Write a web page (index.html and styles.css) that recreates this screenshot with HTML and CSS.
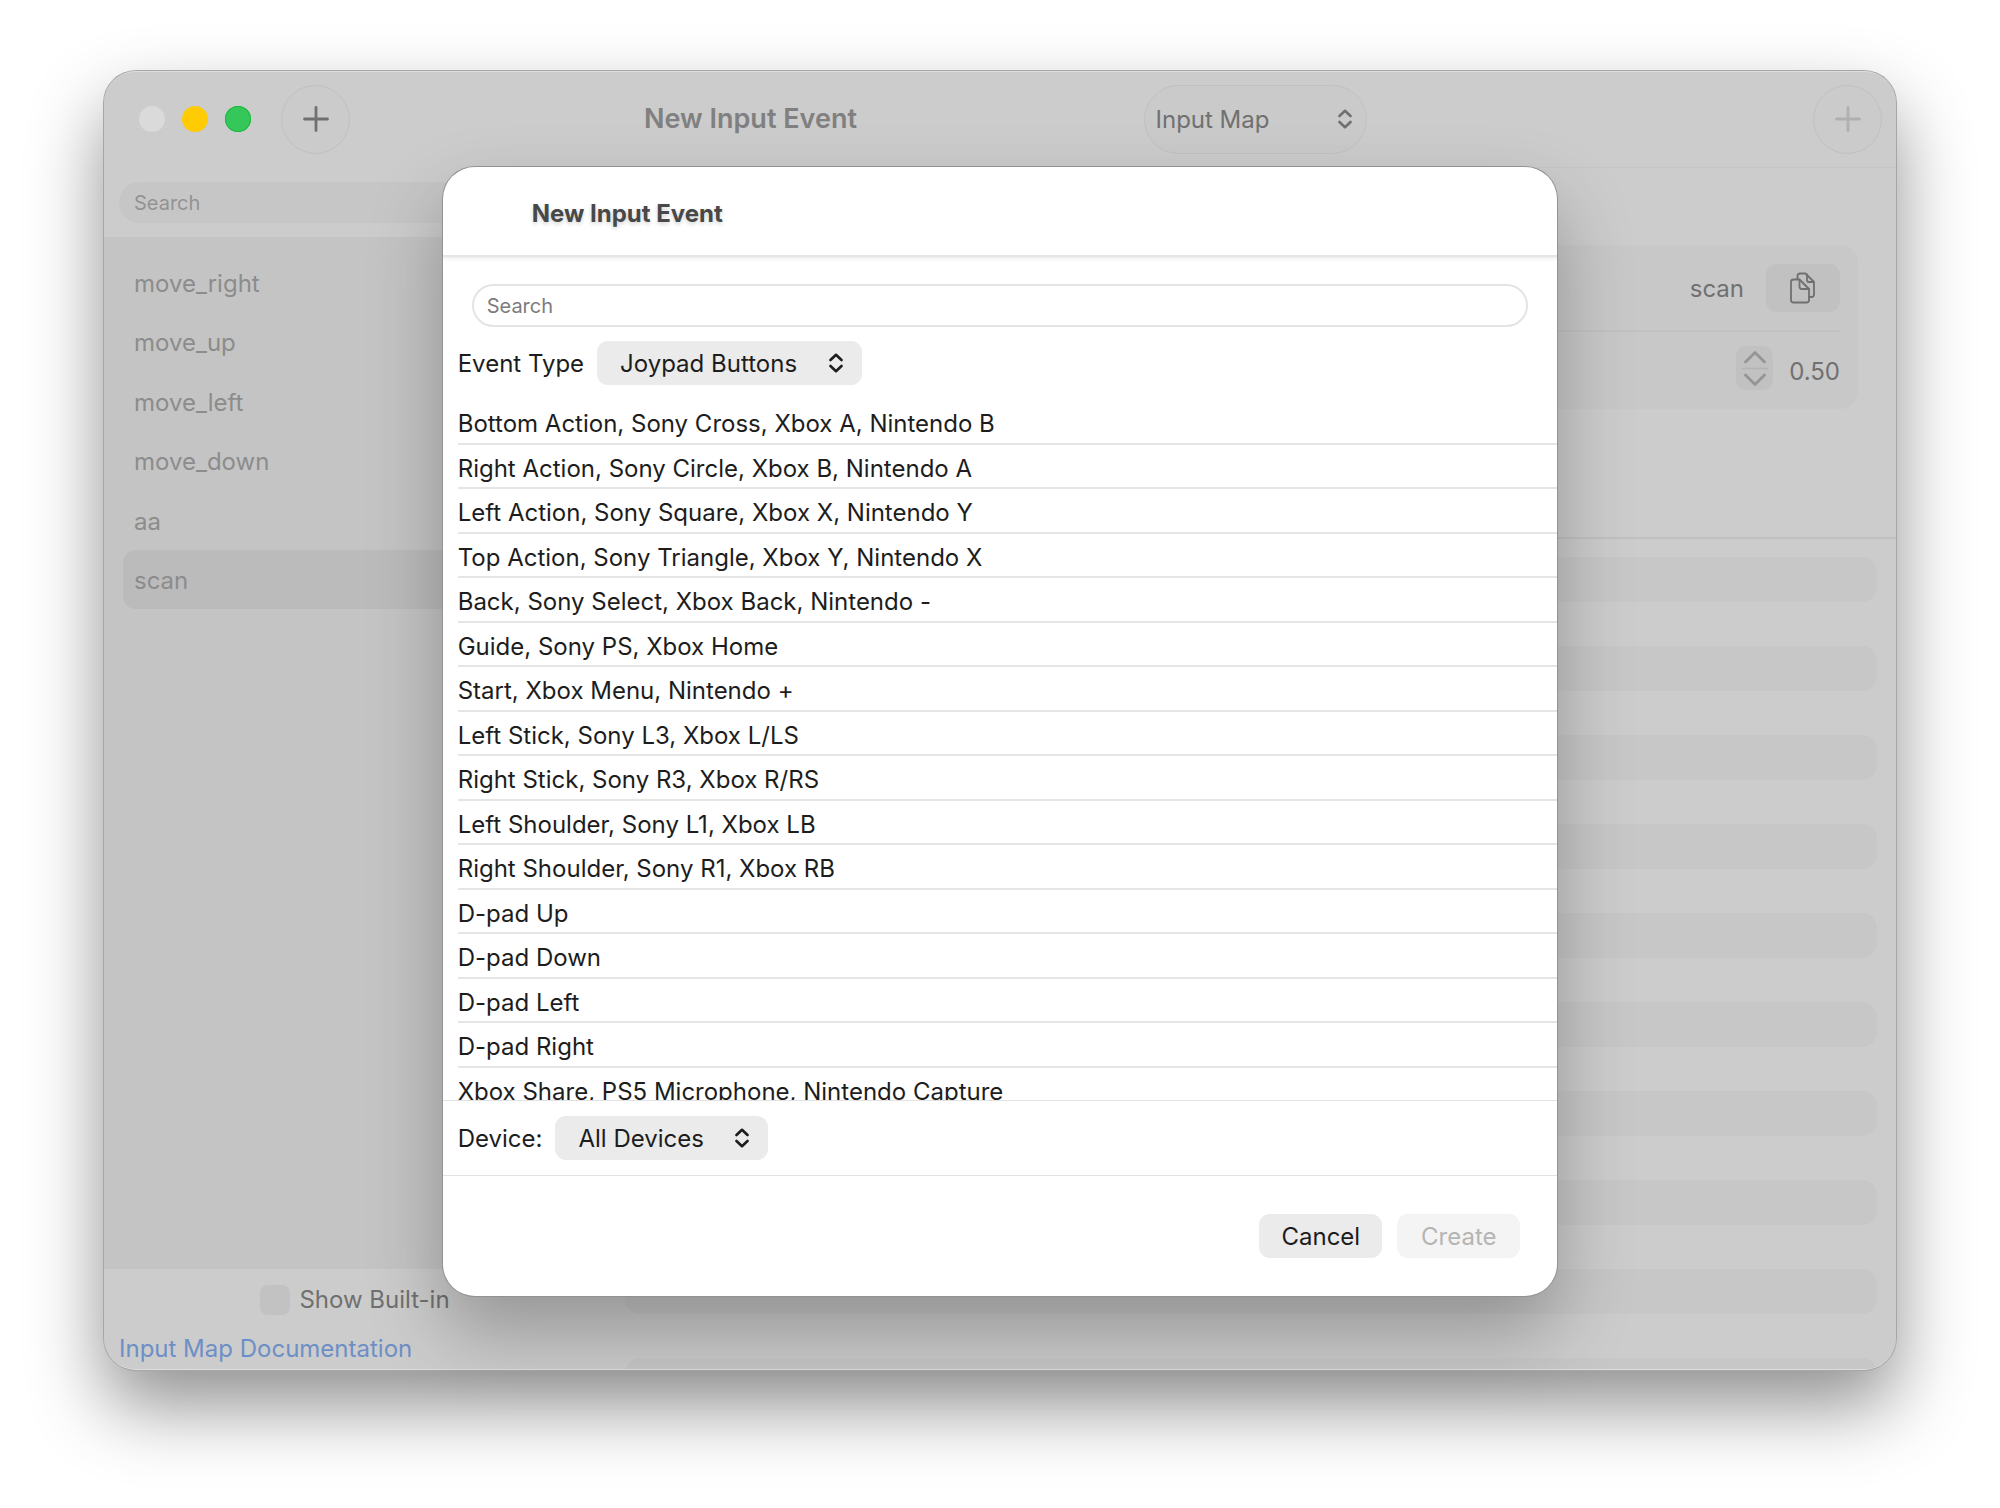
FILE: index.html
```html
<!DOCTYPE html>
<html lang="en">
<head>
<meta charset="utf-8">
<title>New Input Event</title>
<link rel="stylesheet" href="styles.css">
</head>
<body>
<svg class="symbols" aria-hidden="true">
  <symbol id="updown" viewBox="0 0 14 20"><path d="M1.5 7 7 1.8 12.5 7M1.5 13 7 18.2 12.5 13" fill="none" stroke="currentColor" stroke-width="2.6" stroke-linecap="round" stroke-linejoin="round"/></symbol>
  <symbol id="plus" viewBox="0 0 26 26"><path d="M13 1.5v23M1.5 13h23" fill="none" stroke="currentColor" stroke-width="2.8" stroke-linecap="round"/></symbol>
</svg>
<div class="stage">
  <main class="window">
    <section class="sidebar">
      <header class="toolbar toolbar-side">
        <div class="lights">
          <span class="light light-close"></span>
          <span class="light light-min"></span>
          <span class="light light-max"></span>
        </div>
        <button class="round-button" aria-label="Add action"><svg class="icon-plus"><use href="#plus"/></svg></button>
      </header>
      <input class="side-search" type="search" placeholder="Search" aria-label="Search actions">
      <ul class="actions">
        <li class="action">move_right</li>
        <li class="action">move_up</li>
        <li class="action">move_left</li>
        <li class="action">move_down</li>
        <li class="action">aa</li>
        <li class="action action-selected">scan</li>
      </ul>
      <footer class="side-footer">
        <label class="toggle"><input class="checkbox" type="checkbox">Show Built-in</label>
        <a class="doc-link" href="#docs">Input Map Documentation</a>
      </footer>
    </section>
    <section class="detail">
      <header class="toolbar toolbar-main">
        <h1 class="window-title">New Input Event</h1>
        <div class="popup popup-toolbar">
          <select class="popup-select" aria-label="Section"><option>Input Map</option></select>
          <svg class="icon-updown"><use href="#updown"/></svg>
        </div>
        <button class="round-button round-button-end" aria-label="Add event" disabled><svg class="icon-plus"><use href="#plus"/></svg></button>
      </header>
      <div class="card">
        <div class="card-row">
          <span>scan</span>
          <button class="copy-button" aria-label="Copy name">
            <svg class="icon-copy" viewBox="0 0 26 32" fill="none" stroke="currentColor" stroke-width="1.8" stroke-linejoin="round" stroke-linecap="round">
              <path d="M7.500 7V4q0-2.500 2.500-2.500h5.500L24 10v12.500q0 2.500-2.500 2.500H19"/>
              <path d="M17 2.500V8q0 2 2 2h4.500"/>
              <path d="M3.500 7.500H9.500L19 17V28q0 2.500-2.500 2.500h-13Q1 30.500 1 28V10q0-2.500 2.500-2.500z"/>
              <path d="M9.500 7.500v7q0 2.500 2.500 2.500h7"/>
            </svg>
          </button>
        </div>
        <div class="card-row">
          <button class="stepper" aria-label="Adjust deadzone">
            <svg class="icon-stepper" viewBox="0 0 26 36" fill="none" stroke="currentColor" stroke-linecap="round" stroke-linejoin="round">
              <path d="M3.500 12 13 2.500 22.500 12M3.500 25l9.500 9.500L22.500 25" stroke-width="2.800"/>
              <path class="stepper-line" d="M0 18.500h26" stroke-width="1.500"/>
            </svg>
          </button>
          <span>0.50</span>
        </div>
      </div>
      <div class="bars">
        <div class="bar"></div><div class="bar"></div><div class="bar"></div><div class="bar"></div><div class="bar"></div>
        <div class="bar"></div><div class="bar"></div><div class="bar"></div><div class="bar"></div><div class="bar"></div>
      </div>
    </section>
  </main>

  <section class="sheet" role="dialog" aria-labelledby="sheet-title">
    <header class="sheet-header"><h2 class="sheet-title" id="sheet-title">New Input Event</h2></header>
    <input class="sheet-search" type="search" placeholder="Search" aria-label="Search events">
    <div class="field">
      <label for="event-type">Event Type</label>
      <div class="popup popup-type">
        <select class="popup-select" id="event-type"><option>Joypad Buttons</option></select>
        <svg class="icon-updown"><use href="#updown"/></svg>
      </div>
    </div>
    <ul class="events">
      <li class="event">Bottom Action, Sony Cross, Xbox A, Nintendo B</li>
      <li class="event">Right Action, Sony Circle, Xbox B, Nintendo A</li>
      <li class="event">Left Action, Sony Square, Xbox X, Nintendo Y</li>
      <li class="event">Top Action, Sony Triangle, Xbox Y, Nintendo X</li>
      <li class="event">Back, Sony Select, Xbox Back, Nintendo -</li>
      <li class="event">Guide, Sony PS, Xbox Home</li>
      <li class="event">Start, Xbox Menu, Nintendo +</li>
      <li class="event">Left Stick, Sony L3, Xbox L/LS</li>
      <li class="event">Right Stick, Sony R3, Xbox R/RS</li>
      <li class="event">Left Shoulder, Sony L1, Xbox LB</li>
      <li class="event">Right Shoulder, Sony R1, Xbox RB</li>
      <li class="event">D-pad Up</li>
      <li class="event">D-pad Down</li>
      <li class="event">D-pad Left</li>
      <li class="event">D-pad Right</li>
      <li class="event">Xbox Share, PS5 Microphone, Nintendo Capture</li>
    </ul>
    <div class="field field-device">
      <label for="device">Device:</label>
      <div class="popup popup-device">
        <select class="popup-select" id="device"><option>All Devices</option></select>
        <svg class="icon-updown"><use href="#updown"/></svg>
      </div>
    </div>
    <footer class="sheet-footer">
      <button class="push">Cancel</button>
      <button class="push" disabled>Create</button>
    </footer>
  </section>
</div>
</body>
</html>
```
FILE: styles.css
```css
* { box-sizing: border-box; }

body {
  margin: 0;
  padding: 71px 104px 138px;
  background: #fff;
  color: #1d1d1d;
  font-family: Inter, "Liberation Sans", sans-serif;
  font-size: 24px;
  line-height: 30px;
}

input, select, button { margin: 0; border: 0; font: inherit; color: inherit; }
ul { margin: 0; padding: 0; list-style: none; }
h1, h2 { margin: 0; }

.symbols { display: none; }

.stage { display: grid; }

.window, .sheet { grid-area: 1 / 1; border-radius: 32px; overflow: hidden; }

.window {
  display: grid;
  grid-template-columns: 502px minmax(0, 1fr);
  grid-template-rows: minmax(0, 1fr);
  height: calc(100vh - 209px);
  background: #ccc;
  color: #707070;
  box-shadow: 0 0 0 1px #a6a6a6, 0 36px 74px rgba(0, 0, 0, .44);
  border: solid #dedede;
  border-width: 1px 0;
}

/* Toolbar */
.toolbar { height: 96px; flex: none; padding-bottom: 2px; }
.toolbar-side { display: flex; align-items: center; padding-left: 35px; gap: 30px; }
.lights { display: flex; gap: 17px; }
.light { width: 26px; height: 26px; border-radius: 50%; }
.light-close { background: #dadada; }
.light-min { background: #ffcb05; }
.light-max { background: #35c759; box-shadow: inset 0 0 0 1px #1cb93f; }

.round-button {
  display: grid;
  place-items: center;
  width: 69px;
  height: 69px;
  padding: 0;
  border-radius: 50%;
  border: 1px solid #c0c0c0;
  background: #cbcbcb;
}
.round-button:disabled { color: #b0b0b0; }
.round-button-end { justify-self: end; }
.icon-plus { width: 26px; height: 26px; }

.toolbar-main {
  display: grid;
  grid-template-columns: 1fr auto 1fr;
  align-items: center;
  padding: 0 14px 1px 22px;
  border-bottom: 1px solid #c5c5c5;
}
.window-title { padding-left: 16px; font-size: 27px; font-weight: 600; color: #808080; }

/* Pop-up buttons */
.popup { display: grid; align-items: center; }
.popup-select {
  grid-area: 1 / 1;
  height: 44px;
  padding: 2px 23px 0;
  border-radius: 11px;
  background: #ebebeb;
  appearance: none;
}
.icon-updown { grid-area: 1 / 1; justify-self: end; width: 14px; height: 20px; margin-right: 19px; pointer-events: none; }
.popup-type { width: 265px; }
.popup-device { width: 213px; }
.popup-toolbar { width: 223px; }
.popup-toolbar .popup-select { height: 69px; padding: 2px 11px 0; border: 1px solid #c0c0c0; border-radius: 35px; background: #cacaca; }
.popup-toolbar .icon-updown { margin-right: 15px; }

/* Sidebar */
.sidebar, .detail { display: flex; flex-direction: column; min-width: 0; }
.side-search {
  flex: none;
  height: 41px;
  margin: 14px 15px;
  padding: 0 15px;
  border-radius: 21px;
  background: #c6c6c6;
  font-size: 20px;
}
.side-search::placeholder { color: #939393; opacity: 1; }
.actions { flex: 1; padding: 16px 19px; background: #c4c4c4; color: #8c8c8c; }
.action { height: 59px; padding: 1px 11px 0; line-height: 59px; border-radius: 13px; }
.action:nth-child(even):not(.action-selected) { height: 60px; }
.action-selected { background: #bbb; }
.side-footer { display: flex; flex-direction: column; gap: 18px; padding: 16px 15px 4px; }
.toggle { display: flex; align-items: center; justify-content: center; gap: 9px; }
.checkbox { appearance: none; width: 30px; height: 30px; border-radius: 8px; background: #c2c2c2; }
.doc-link { align-self: flex-start; color: #6c8fc6; text-decoration: none; line-height: 32px; }

/* Detail */
.card { flex: none; margin: 77px 38px 128px; padding: 0 18px; border-radius: 18px; background: #c8c8c8; }
.card-row { display: flex; align-items: center; justify-content: flex-end; height: 77px; gap: 16px; }
.card-row:first-child { height: 87px; gap: 22px; border-bottom: 2px solid #c2c2c2; }
.card-row span { padding-top: 3px; }
.copy-button { display: grid; place-items: center; width: 74px; height: 48px; padding: 0; border-radius: 11px; background: #c1c1c1; }
.icon-copy { width: 26px; height: 32px; }
.stepper { display: grid; place-items: center; width: 37px; height: 44px; margin-bottom: 6px; padding: 0; border-radius: 10px; background: #c1c1c1; color: #959595; }
.icon-stepper { width: 26px; height: 36px; }
.stepper-line { stroke: #b4b4b4; }
.bars {
  display: flex;
  flex-direction: column;
  flex: 1;
  gap: 44px;
  min-height: 0;
  padding: 18px 19px 0;
  overflow: hidden;
  border-top: 2px solid #c1c1c1;
}
.bar { flex: none; height: 45px; border-radius: 15px; background: #c7c7c7; }

/* Sheet */
.sheet {
  align-self: start;
  justify-self: center;
  width: 62.2%;
  min-width: 620px;
  margin-top: 96px;
  background: #fff;
  box-shadow: 0 0 0 1px #929292, 0 36px 74px rgba(0, 0, 0, .27);
}
.sheet-header { padding: 32px 89px 26px; border-bottom: 2px solid #e5e5e5; box-shadow: 0 1px 4px #0000001a; }
.sheet-title { font-size: 24px; font-weight: 700; color: #484848; text-shadow: 0 2px 4px #0000002e; }
.sheet-search {
  display: block;
  width: calc(100% - 58px);
  height: 43px;
  margin: 27px 29px 14px;
  padding: 0 13px;
  border: 2px solid #e4e4e4;
  border-radius: 22px;
  background: #fff;
  font-size: 20px;
}
.sheet-search::placeholder { color: #7c7c7c; opacity: 1; }
.field { display: flex; align-items: center; gap: 13px; padding: 0 15px; }
.field label { padding-top: 2px; }
.events { height: 700px; margin-top: 15px; padding-left: 15px; overflow: auto; scrollbar-width: none; }
.event { height: 45px; padding-top: 9px; border-bottom: 2px solid #e5e5e5; }
.event:nth-child(even) { height: 44px; }
.field-device { padding: 15px; border: solid #e2e2e2; border-width: 1px 0; }
.sheet-footer { display: flex; justify-content: flex-end; gap: 15px; padding: 38px 37px; }
.push { width: 123px; height: 44px; padding: 2px 0 0; border-radius: 11px; background: #ebebeb; }
.push:disabled { background: #f4f4f4; color: #b5b5b5; }
```
